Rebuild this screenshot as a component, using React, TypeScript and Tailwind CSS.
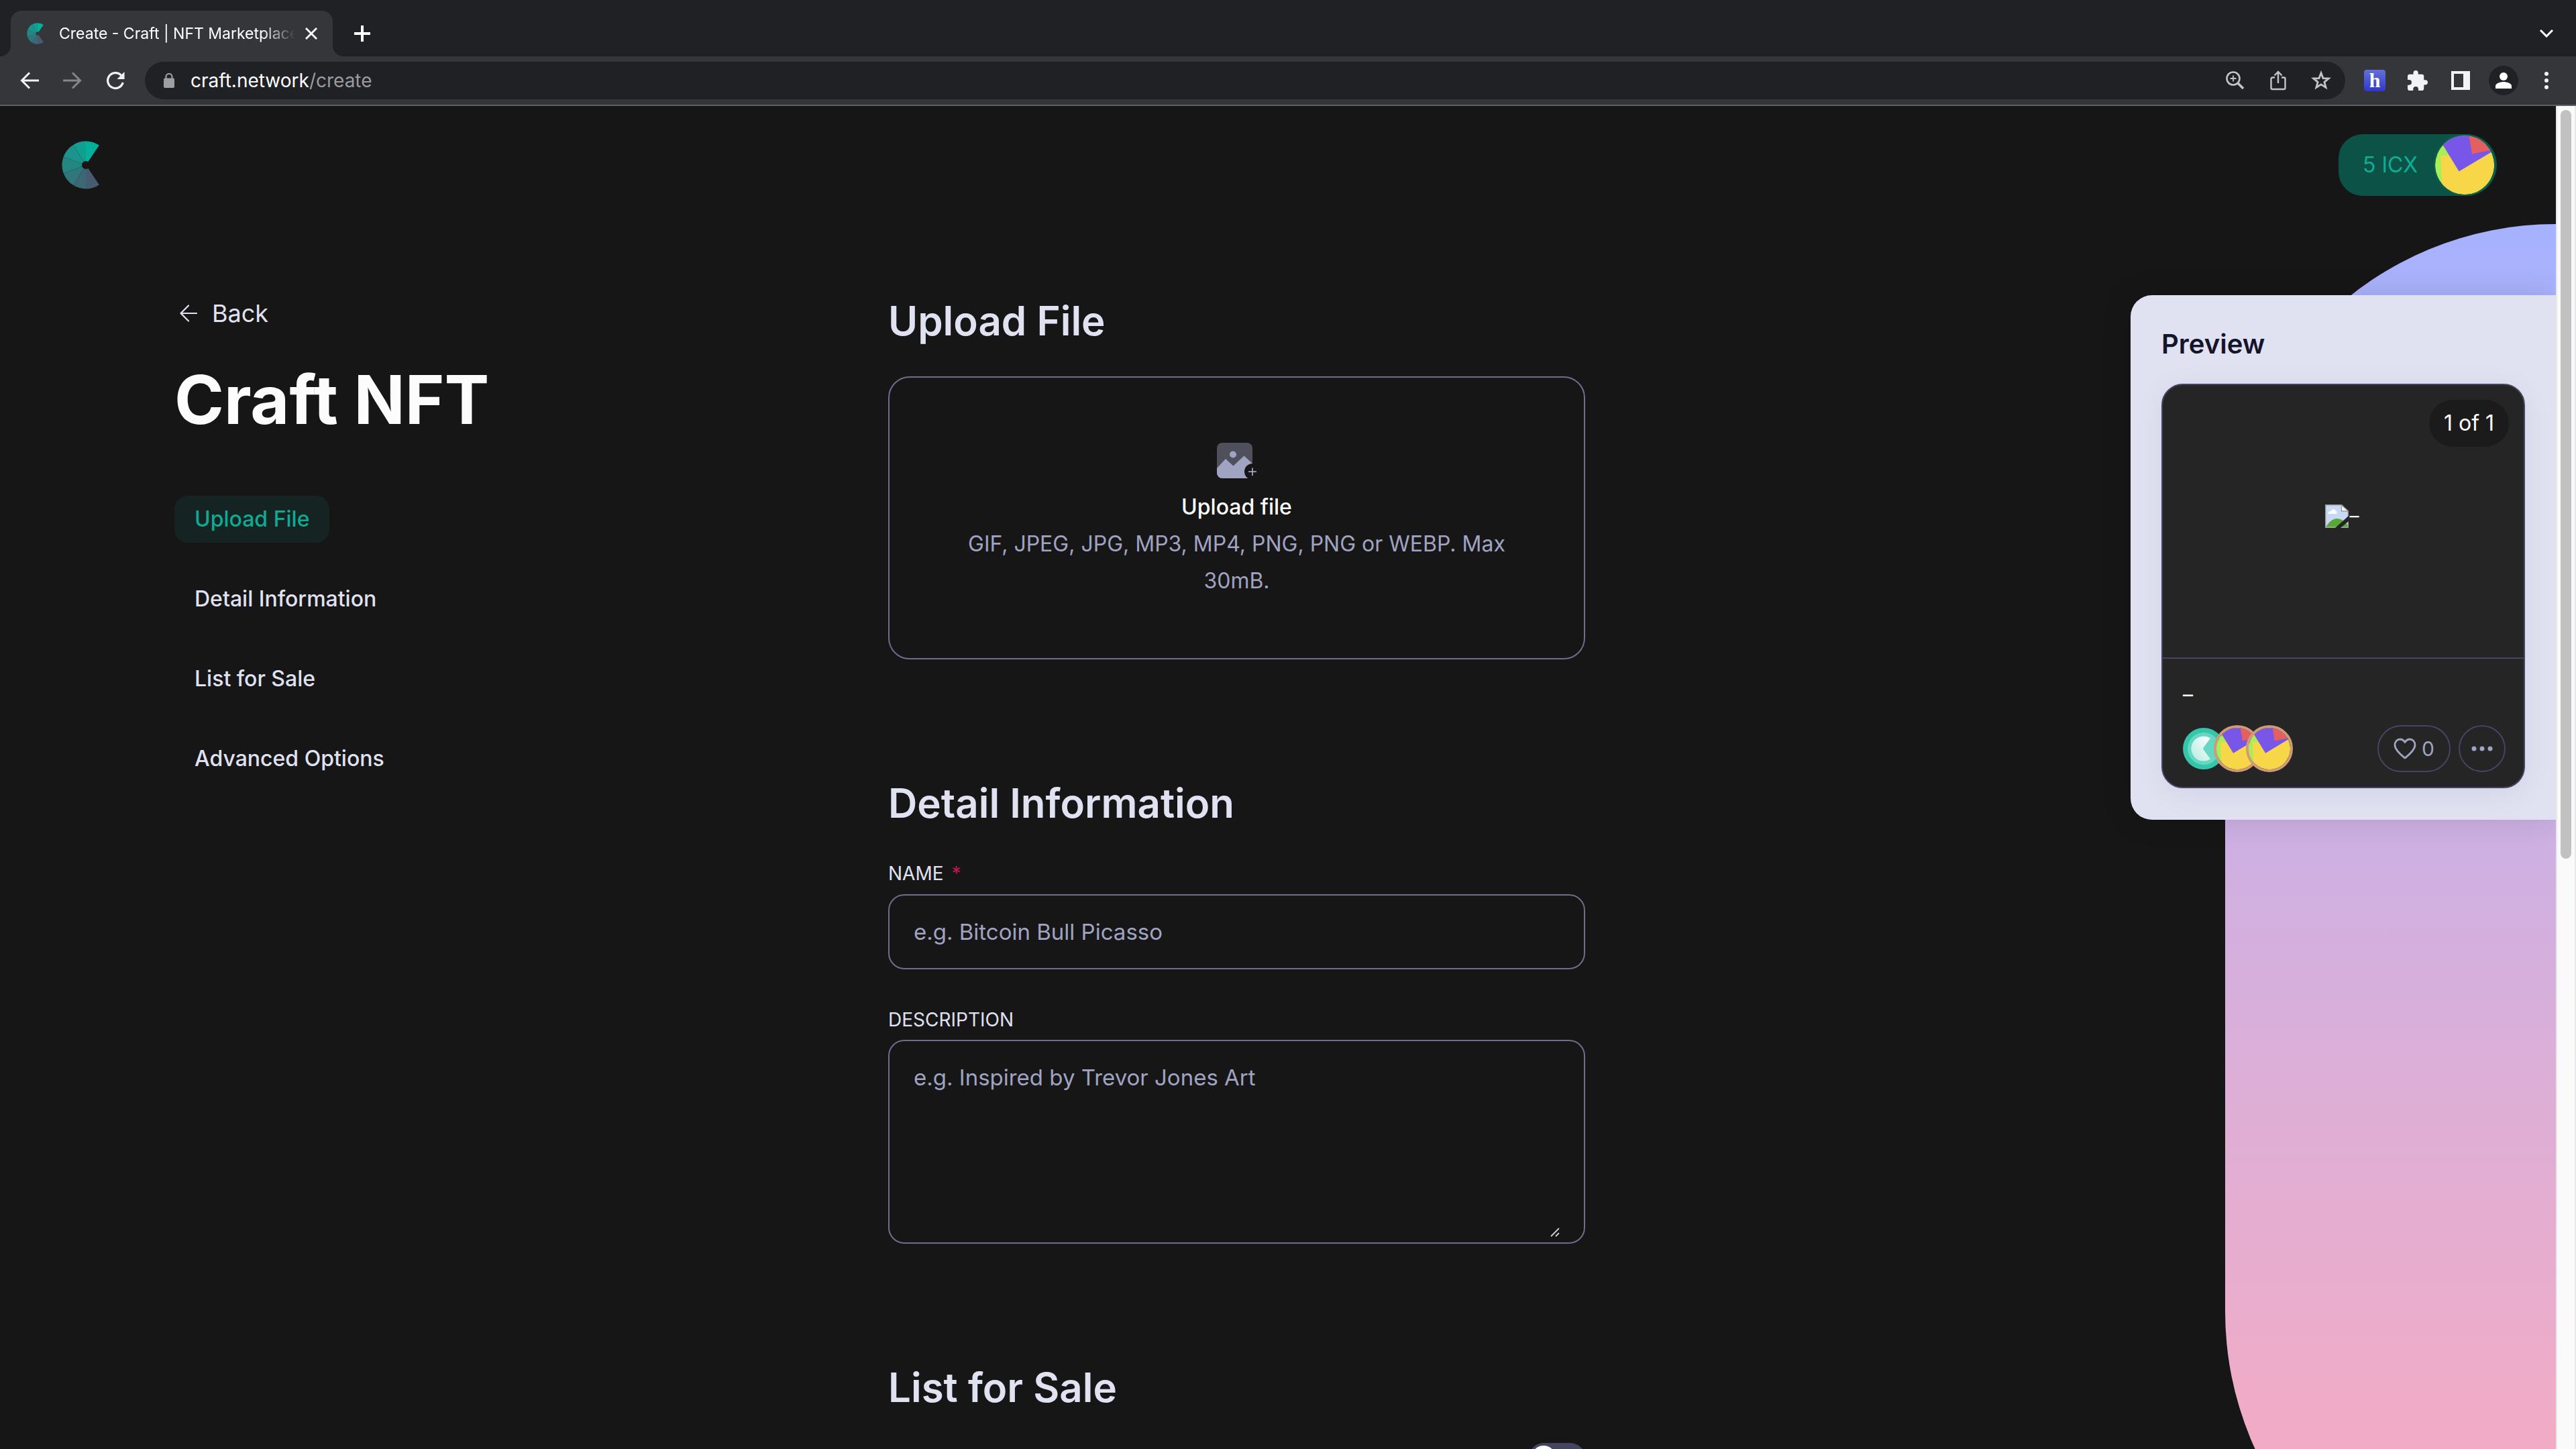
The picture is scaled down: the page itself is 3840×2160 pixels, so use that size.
import React, { useId } from "react";

const LOGO_SLICES: [number, number, string][] = [
  [56, 90, "#05b09a"],
  [90, 122, "#109f91"],
  [122, 160, "#1b958b"],
  [160, 200, "#258580"],
  [200, 238, "#2f777a"],
  [238, 270, "#3b6874"],
  [270, 304, "#465a70"],
];

function slicePath(from: number, to: number) {
  const point = (deg: number, r: number) => {
    const a = (deg * Math.PI) / 180;
    return `${(36 + r * Math.cos(a)).toFixed(2)} ${(36 - r * Math.sin(a)).toFixed(2)}`;
  };
  return `M${point(from, 6)}L${point(from, 35.5)}A35.5 35.5 0 0 0 ${point(to, 35.5)}L${point(to, 6)}A6 6 0 0 1 ${point(from, 6)}Z`;
}

function CraftLogo({ className }: { className: string }) {
  return (
    <svg viewBox="0 0 56 72" className={className} aria-hidden="true">
      {LOGO_SLICES.map(([from, to, fill]) => (
        <path key={from} d={slicePath(from, to)} fill={fill} />
      ))}
    </svg>
  );
}

function Identicon({ className }: { className: string }) {
  const id = useId();
  return (
    <svg viewBox="0 0 88 88" className={className} aria-hidden="true">
      <clipPath id={id}>
        <circle cx="44" cy="44" r="44" />
      </clipPath>
      <g clipPath={`url(#${id})`}>
        <rect width="88" height="88" fill="#a8ee56" />
        <path d="M8 30.500L100 24V100H12Z" fill="#f7d748" />
        <path d="M35.600 53.500L-2 -8L50 -20L100 -6V15Z" fill="#7857e8" />
        <path d="M49.500 -6L55 27.500L92 20V-6Z" fill="#e35f60" />
      </g>
    </svg>
  );
}

function TabStrip() {
  return (
    <div className="flex h-[84px] items-end bg-[#202124]">
      <svg viewBox="0 0 16 16" className="size-4 shrink-0" aria-hidden="true">
        <path d="M16 0V16H0A16 16 0 0 0 16 0Z" fill="#35363a" />
      </svg>
      <div className="flex h-[68px] w-[480px] items-center rounded-t-2xl bg-[#35363a] pl-6 pr-4">
        <CraftLogo className="h-8 w-[25px] shrink-0" />
        <div className="ml-[23px] min-w-0 flex-1 overflow-hidden whitespace-nowrap text-[23px] text-white [mask-image:linear-gradient(to_right,black_86%,transparent)]">
          Create - Craft | NFT Marketplace
        </div>
        <button aria-label="Close tab" className="ml-2 flex size-8 items-center justify-center">
          <svg viewBox="0 0 18 18" className="size-[18px]" fill="none" stroke="#fff" strokeWidth="2.800">
            <path d="M1 1L17 17M17 1L1 17" />
          </svg>
        </button>
      </div>
      <svg viewBox="0 0 16 16" className="size-4 shrink-0" aria-hidden="true">
        <path d="M0 0V16H16A16 16 0 0 1 0 0Z" fill="#35363a" />
      </svg>
      <button aria-label="New tab" className="mb-[14px] ml-2 flex size-10 items-center justify-center">
        <svg viewBox="0 0 24 24" className="size-6" fill="none" stroke="#fff" strokeWidth="4">
          <path d="M12 0V24M0 12H24" />
        </svg>
      </button>
      <button aria-label="Search tabs" className="mb-[14px] ml-auto mr-6 flex size-10 items-center justify-center">
        <svg viewBox="0 0 20 12" className="h-3 w-5" fill="none" stroke="#fff" strokeWidth="3">
          <path d="M1 1L10 10L19 1" />
        </svg>
      </button>
    </div>
  );
}

function Toolbar() {
  return (
    <div className="flex h-[74px] items-center border-b-2 border-[#5f6063] bg-[#35363a]">
      <nav className="flex w-[216px] shrink-0 items-center pl-6">
        <button aria-label="Go back" className="flex size-10 items-center justify-center">
          <svg viewBox="0 0 28 26" className="h-[26px] w-7" fill="none" stroke="#f1f3f4" strokeWidth="3">
            <path d="M28 13H3M14 1.500L2.500 13L14 24.500" />
          </svg>
        </button>
        <button aria-label="Go forward" className="ml-6 flex size-10 items-center justify-center">
          <svg viewBox="0 0 28 26" className="h-[26px] w-7" fill="none" stroke="#85868a" strokeWidth="3">
            <path d="M0 13H25M14 1.500L25.500 13L14 24.500" />
          </svg>
        </button>
        <button aria-label="Reload" className="ml-6 flex size-10 items-center justify-center">
          <svg viewBox="0 0 28 28" className="size-7">
            <path d="M22.500 6.200A11.500 11.500 0 1 0 25.200 17" fill="none" stroke="#f1f3f4" strokeWidth="3.200" />
            <path d="M27.500 1V12H16.500Z" fill="#f1f3f4" />
          </svg>
        </button>
      </nav>
      <div className="flex h-14 min-w-0 flex-1 items-center rounded-full bg-[#202124] pl-7 pr-4">
        <svg viewBox="0 0 16 22" className="h-[22px] w-4 shrink-0" aria-hidden="true">
          <rect y="7.500" width="16" height="14.500" rx="2" fill="#9aa0a6" />
          <path d="M3.500 8V5.500A4.500 4.500 0 0 1 12.500 5.500V8" fill="none" stroke="#9aa0a6" strokeWidth="2.200" />
        </svg>
        <div className="ml-6 flex-1 text-[28px] text-[#9a9b9e]">
          <span className="text-white">craft.network</span>/create
        </div>
        <button aria-label="Zoom" className="flex size-10 items-center justify-center">
          <svg viewBox="0 0 28 28" className="size-7" fill="none" stroke="#c3c4c7">
            <circle cx="11" cy="11" r="9.500" strokeWidth="2.600" />
            <path d="M18 18L26 26" strokeWidth="3.600" />
            <path d="M11 6.500V15.500M6.500 11H15.500" strokeWidth="1.800" />
          </svg>
        </button>
        <button aria-label="Share" className="ml-6 flex size-10 items-center justify-center">
          <svg viewBox="0 0 24 30" className="h-[30px] w-6" fill="none" stroke="#c3c4c7" strokeWidth="2.400">
            <path d="M7 10.500H3.500A2 2 0 0 0 1.500 12.500V26A2 2 0 0 0 3.500 28H20.500A2 2 0 0 0 22.500 26V12.500A2 2 0 0 0 20.500 10.500H17" />
            <path d="M12 19V2.500M6.500 7.500L12 2L17.500 7.500" />
          </svg>
        </button>
        <button aria-label="Bookmark" className="ml-6 flex size-10 items-center justify-center">
          <svg viewBox="0 0 30 30" className="size-[30px]" fill="none" stroke="#c3c4c7" strokeWidth="2.800">
            <path d="M15 3.800L18 11.600L26.300 12L19.900 17.300L22.100 25.400L15 20.800L7.900 25.400L10.100 17.300L3.700 12L12 11.600Z" />
          </svg>
        </button>
      </div>
      <div className="flex shrink-0 items-center pl-7 pr-6">
        <button
          aria-label="Extension"
          className="flex size-8 items-center justify-center rounded bg-linear-to-b from-[#6470d8] to-[#3136c8] font-['Liberation_Serif',serif] text-3xl font-bold leading-8 text-white"
        >
          h
        </button>
        <button aria-label="Extensions" className="ml-7 flex size-10 items-center justify-center">
          <svg viewBox="2 1 21 21" className="size-[30px]" fill="#f1f3f4">
            <path d="M20.500 11H19V7c0-1.100-.9-2-2-2h-4V3.500a2.500 2.500 0 0 0-5 0V5H4c-1.100 0-2 .9-2 2v3.800h1.500a2.700 2.700 0 0 1 0 5.400H2V20c0 1.100.9 2 2 2h3.800v-1.500a2.700 2.700 0 0 1 5.400 0V22H17c1.100 0 2-.9 2-2v-4h1.500a2.500 2.500 0 0 0 0-5z" />
          </svg>
        </button>
        <button aria-label="Side panel" className="ml-6 flex size-10 items-center justify-center">
          <svg viewBox="0 0 28 28" className="size-7" aria-hidden="true">
            <path d="M0 0H28V28H0ZM4 4V24H18V4Z" fill="#f1f3f4" fillRule="evenodd" />
          </svg>
        </button>
        <button aria-label="Profile" className="ml-[22px] flex size-11 items-center justify-center rounded-full bg-[#202124]">
          <svg viewBox="0 0 24 24" className="size-6" fill="#fff">
            <circle cx="12" cy="6" r="6" />
            <path d="M0 24V20C0 16 8 14 12 14S24 16 24 20V24Z" />
          </svg>
        </button>
        <button aria-label="Menu" className="ml-[22px] flex size-10 items-center justify-center">
          <svg viewBox="0 0 6 28" className="h-7 w-[6px]" fill="#f1f3f4">
            <circle cx="3" cy="4" r="3" />
            <circle cx="3" cy="14" r="3" />
            <circle cx="3" cy="24" r="3" />
          </svg>
        </button>
      </div>
    </div>
  );
}

function Header() {
  return (
    <header className="relative flex h-[134px] items-end justify-between pl-[92px] pr-[88px]">
      <a href="#home" aria-label="Craft home" className="mb-[10px]">
        <CraftLogo className="h-[72px] w-14" />
      </a>
      <button className="flex h-[92px] items-center rounded-l-[36px] rounded-r-[46px] bg-[#0d5247] pl-9 pr-[2px] text-[32px] text-[#0dae96]">
        5 ICX
        <Identicon className="ml-6 size-[92px] rounded-full border-2 border-[#0c5e50]" />
      </button>
    </header>
  );
}

const NAV_ITEMS = ["Upload File", "Detail Information", "List for Sale", "Advanced Options"];

function Sidebar() {
  return (
    <aside className="flex flex-col items-start pt-[148px]">
      <a href="#back" className="flex items-center gap-[22px] pl-2 text-4xl leading-[54px] text-[#e0e1f1]">
        <svg viewBox="0 0 26 26" className="size-[26px]" fill="none" stroke="#e0e1f1" strokeWidth="2.200" strokeLinecap="round" strokeLinejoin="round">
          <path d="M25 13H1.500M13 1.500L1.500 13L13 24.500" />
        </svg>
        Back
      </a>
      <h1 className="mt-[42px] text-[100px] font-bold leading-[120px] text-[#fcfcfc]">Craft NFT</h1>
      <nav className="mt-[83px] flex flex-col items-start gap-[49px]">
        {NAV_ITEMS.map((item, i) => (
          <a
            key={item}
            href={`#${item.toLowerCase().replace(/ /g, "-")}`}
            className={
              i === 0
                ? "rounded-[20px] bg-[#152423] px-[30px] text-[32px] font-medium leading-[70px] text-[#0dab94]"
                : "px-[30px] text-[32px] font-medium leading-[70px] text-[#e0e1f1]"
            }
          >
            {item}
          </a>
        ))}
      </nav>
    </aside>
  );
}

function SectionTitle({ children }: { children: React.ReactNode }) {
  return <h2 className="text-[60px] font-semibold leading-[76px] text-[#e0e1f1]">{children}</h2>;
}

function UploadIcon() {
  return (
    <svg viewBox="0 0 60 54" className="h-[54px] w-[60px]" aria-hidden="true">
      <rect width="53" height="53" rx="8" fill="#50505c" />
      <circle cx="24" cy="17.500" r="5" fill="#a1a3c2" />
      <path d="M0 38L13 24L24.500 34.500L40.500 19.500L53 31V45A8 8 0 0 1 45 53H8A8 8 0 0 1 0 45Z" fill="#a1a3c2" />
      <circle cx="53" cy="43" r="12" fill="#161616" />
      <path d="M53 37.500V49M47 43.200H59" stroke="#a1a3c2" strokeWidth="1.800" />
    </svg>
  );
}

function Form() {
  return (
    <main className="flex flex-col pt-[148px]">
      <SectionTitle>Upload File</SectionTitle>
      <label className="mt-[45px] flex cursor-pointer flex-col items-center rounded-[32px] border-2 border-[#6e6d8c] pb-[88px] pt-[97px] text-center">
        <UploadIcon />
        <input type="file" className="sr-only" />
        <span className="mt-[14px] text-[32px] font-medium leading-[55px] text-[#fcfcfc]">Upload file</span>
        <span className="max-w-[850px] text-[32px] leading-[55px] text-[#a1a3c2]">
          GIF, JPEG, JPG, MP3, MP4, PNG, PNG or WEBP. Max 30mB.
        </span>
      </label>

      <div className="mt-44">
        <SectionTitle>Detail Information</SectionTitle>
      </div>
      <label htmlFor="nft-name" className="mt-[47px] text-[28px] leading-10 text-[#e0e1f1]">
        NAME <span className="ml-1 text-[#c4154f]">*</span>
      </label>
      <input
        id="nft-name"
        type="text"
        placeholder="e.g. Bitcoin Bull Picasso"
        className="mt-[11px] h-28 rounded-3xl border-2 border-[#6e6d8c] bg-transparent px-9 text-[33px] text-white outline-none placeholder:text-[#a1a3c2]"
      />
      <label htmlFor="nft-description" className="mt-[55px] text-[28px] leading-10 text-[#e0e1f1]">
        DESCRIPTION
      </label>
      <div className="relative mt-[10px] rounded-3xl border-2 border-[#6e6d8c] px-9 pb-[10px] pt-[30px]">
        <textarea
          id="nft-description"
          placeholder="e.g. Inspired by Trevor Jones Art"
          className="block h-[260px] w-full resize-none bg-transparent text-[33px] leading-[48px] text-white outline-none placeholder:text-[#a1a3c2]"
        />
        <svg
          viewBox="0 0 14 14"
          className="pointer-events-none absolute bottom-2 right-9 size-[14px]"
          stroke="#d0d0d0"
          strokeWidth="1.800"
          aria-hidden="true"
        >
          <path d="M1 13L13 1M8 13L13 8" />
        </svg>
      </div>

      <div className="mt-44">
        <SectionTitle>List for Sale</SectionTitle>
      </div>
      <label className="mt-[45px] flex h-11 w-[84px] cursor-pointer items-center self-end rounded-full bg-[#45455f] p-1">
        <input type="checkbox" role="switch" aria-label="List for sale" className="sr-only" />
        <span className="size-9 rounded-full bg-white" />
      </label>
    </main>
  );
}

function BrokenImage() {
  return (
    <svg viewBox="0 0 35 35" className="size-[35px]" aria-hidden="true">
      <path d="M.7.700H24.500L34.300 10V34.300H.7Z" fill="#c8d9f6" stroke="#9b9b9b" strokeWidth="1.400" />
      <path d="M4.500 14C4.500 10.500 7.500 9.500 9 10C10 5.500 15.500 6.500 15.500 9.500C18 10 18 14 16 14Z" fill="#fff" />
      <path d="M1.400 33.600C5 26 12 21 17.500 21C23 21 30 25 33.600 31V33.600Z" fill="#58a834" />
      <path d="M24.500.700V10H34.300Z" fill="#fff" stroke="#9b9b9b" strokeWidth="1.400" />
      <path d="M35 17V25L23 35H15Z" fill="#252525" />
    </svg>
  );
}

function IconBadge() {
  const id = useId();
  return (
    <svg viewBox="0 0 62 62" className="size-[62px]" aria-hidden="true">
      <linearGradient id={id} x1="0" y1="1" x2="1" y2="0">
        <stop offset="0" stopColor="#ffffff" stopOpacity="0.500" />
        <stop offset="1" stopColor="#ffffff" />
      </linearGradient>
      <circle cx="31" cy="31" r="31" fill="#35c5ab" />
      <circle cx="31" cy="31" r="24" fill="#66d8c1" />
      <path d="M41 15.500A18.500 18.500 0 1 0 41 46.500L31 33A3 3 0 0 1 31 29Z" fill={`url(#${id})`} />
    </svg>
  );
}

function Preview() {
  return (
    <section className="col-start-4 mt-[148px] self-start rounded-l-[32px] bg-[#e0e1f1] px-[46px] pb-[47px] pt-11 shadow-[0_0_48px_rgba(0,0,0,0.12)]">
      <h2 className="text-[40px] font-semibold leading-[58px] text-[#14142b]">Preview</h2>
      <article className="mt-[30px] rounded-[32px] border-2 border-[#464462] bg-[#252525] text-white shadow-[0_8px_48px_rgba(20,20,43,0.06)]">
        <div className="flex h-[408px] flex-col border-b-2 border-[#464462] pr-[22px] pt-[22px]">
          <span className="self-end rounded-full bg-[#1b1b1b] px-[22px] text-[32px] leading-[70px]">1 of 1</span>
          <div className="flex items-center justify-center gap-[2px] pl-[18px] pt-[85px]">
            <BrokenImage />
            <span className="text-[28px] leading-9">–</span>
          </div>
        </div>
        <div className="pb-[22px] pl-[30px] pr-[27px] pt-7">
          <h3 className="text-[30px] leading-[50px]">–</h3>
          <div className="mt-[21px] flex items-center">
            <IconBadge />
            <Identicon className="-ml-4 size-[70px] rounded-full border-4 border-[#d09a78]" />
            <Identicon className="-ml-[22px] size-[70px] rounded-full border-4 border-[#d09a78]" />
            <button className="ml-auto flex h-[70px] items-center gap-2 rounded-full border-2 border-[#464462] px-[22px] text-[30px] text-[#a1a3c2]">
              <svg viewBox="0 0 34 32" className="h-8 w-[34px]" fill="none" stroke="#a1a3c2" strokeWidth="2.800" strokeLinejoin="round">
                <path d="M17 30C12 26 2 18.500 2 10.500C2 5.500 5.500 2 9.500 2C12.500 2 15.500 3.800 17 6.500C18.500 3.800 21.500 2 24.500 2C28.500 2 32 5.500 32 10.500C32 18.500 22 26 17 30Z" />
              </svg>
              0
            </button>
            <button aria-label="More actions" className="ml-3 flex size-[70px] items-center justify-center rounded-full border-2 border-[#464462]">
              <svg viewBox="0 0 32 8" className="h-2 w-8" fill="#a1a3c2">
                <circle cx="4" cy="4" r="3.500" />
                <circle cx="16" cy="4" r="3.500" />
                <circle cx="28" cy="4" r="3.500" />
              </svg>
            </button>
          </div>
        </div>
      </article>
    </section>
  );
}

export default function App() {
  return (
    <div className="flex h-screen flex-col overflow-hidden bg-[#161616] font-['Inter',sans-serif]">
      <TabStrip />
      <Toolbar />
      <div className="flex min-h-0 flex-1">
        <div className="relative min-w-0 flex-1 overflow-hidden">
          <div className="absolute -right-[493px] top-44 h-[2114px] w-[986px] rounded-full bg-linear-to-b from-[#a6b2ff] to-[#fda9bb]" />
          <Header />
          <div className="relative grid grid-cols-[1064fr_1039fr_813fr_634px] pl-[260px]">
            <Sidebar />
            <Form />
            <Preview />
          </div>
        </div>
        <div className="w-[30px] shrink-0 border-x-2 border-[#e8e8e8] bg-[#fafafa] px-[5px] pt-[6px]">
          <div className="h-[1116px] rounded-full bg-[#c1c1c1]" />
        </div>
      </div>
    </div>
  );
}
